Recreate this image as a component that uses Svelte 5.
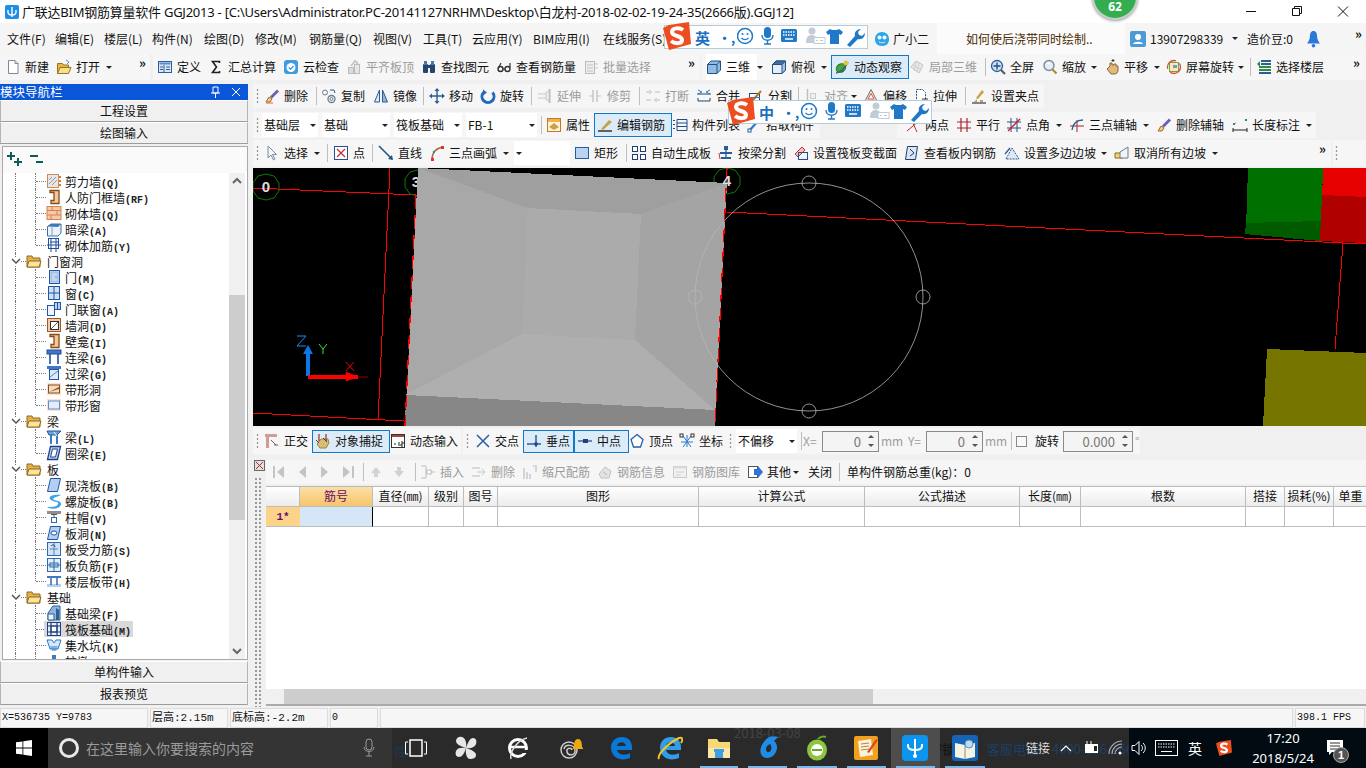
<script>
  const line = (d, c = '#555', w = 1) => `<path d="${d}" fill="none" stroke="${c}" stroke-width="${w}"/>`;
  const box = (x, y, w, h, f, s = 'none') => `<rect x="${x}" y="${y}" width="${w}" height="${h}" fill="${f}" stroke="${s}"/>`;

  const icons = {
    new: `<path d="M3.500 1.500h6.500l3 3v10h-9.500z" fill="#fff" stroke="#7d8a99"/><path d="M10 1.500v3h3" fill="#dfe6ee" stroke="#7d8a99"/>`,
    open: `<path d="M1.500 4.500h5l1 1.500h5v8h-11z" fill="#e9b73f" stroke="#9a7420"/><path d="M1.500 14.500l2.500-6h11l-2.500 6z" fill="#fbe08a" stroke="#9a7420"/>` + line('M10 1l3 2-2 2', '#5a8fc0'),
    def: box(1.500, 2.500, 13, 11, '#dbe8f6', '#2d5f9a') + box(2.500, 3.500, 11, 2, '#5c8ec6') + line('M7 6v7M3 8h3M3 10.500h3M9 8h4M9 10.500h4', '#2d5f9a'),
    sigma: line('M11.500 4V2.500H4.500L8.500 8l-4 5.500h7V12', '#222', 1.600),
    cloud: `<rect x="1" y="1" width="14" height="14" rx="3" fill="#3d9be0"/><circle cx="8" cy="8.500" r="4.500" fill="#fff"/>` + line('M5.800 8.500l1.700 1.800 3-3.300', '#3d9be0', 1.400),
    align: box(2.500, 8.500, 5, 6, '#ddd', '#bbb') + box(8.500, 5.500, 5, 9, '#e6e6e6', '#bbb') + line('M5 7l4-5 3 3', '#c6c6c6', 2),
    find: `<rect x="2" y="5" width="5" height="9" rx="1" fill="#23466f"/><rect x="9" y="5" width="5" height="9" rx="1" fill="#23466f"/><rect x="3" y="2" width="3" height="4" fill="#4a78a8"/><rect x="10" y="2" width="3" height="4" fill="#4a78a8"/><rect x="6" y="6" width="4" height="3" fill="#23466f"/>`,
    glasses: `<circle cx="4.500" cy="10" r="2.500" fill="none" stroke="#333" stroke-width="1.400"/><circle cx="11.500" cy="10" r="2.500" fill="none" stroke="#333" stroke-width="1.400"/>` + line('M7 10h2M2.500 9L5 4M14 9V4', '#333', 1.200),
    batch: box(2.500, 2.500, 9, 12, '#eee', '#bbb') + line('M4 6h6M4 9h6M4 12h6M12 5h3M12 9h3', '#c3c3c3') ,
    cube: `<path d="M1.500 5.500l3.500-3.500h9.500v9l-3.500 3.500h-9.500z" fill="#8fbde6" stroke="#24507e"/><path d="M1.500 5.500h9.500l3.500-3.500M11 5.500v9" fill="none" stroke="#24507e"/>`,
    top: `<path d="M1.500 5.500l3.500-3.500h9.500v9l-3.500 3.500h-9.500z" fill="#e4eef8" stroke="#24507e"/><path d="M1.500 5.500l3.500-3.500h9.500l-3.500 3.500z" fill="#3f6f9f" stroke="#24507e"/><path d="M11 5.500l3.500-3.500v9l-3.500 3.500z" fill="#a5c5e2" stroke="#24507e"/>`,
    orbit: `<ellipse cx="7" cy="9" rx="5" ry="4" fill="#4aa43c" stroke="#2b6a24" transform="rotate(-35 7 9)"/>` + line('M2 14C6 14 12 8 14 3', '#1d5f8a', 1.300) + `<circle cx="12" cy="4" r="2.500" fill="#e3c53a"/>`,
    local: `<path d="M2 8l5-6 7 4-4 8z" fill="#e9e9e9" stroke="#c2c2c2"/>` + line('M4 6l7 4M7 3l-2 9M10 4l-2 8', '#cfcfcf'),
    full: `<circle cx="7" cy="7" r="5.500" fill="#cfe0f2" stroke="#2a5c96" stroke-width="1.300"/>` + line('M7 3.500v7M3.500 7h7', '#1f4d87', 1.300) + line('M11 11l4 4', '#555', 2),
    zoom: `<circle cx="7" cy="6.500" r="5" fill="#e4ecf6" stroke="#7b8a9c" stroke-width="1.400"/>` + line('M10.500 10.500l4 4', '#b08a32', 2.200) + line('M5 4.500h3', '#fff', 1.500),
    pan: `<path d="M3 10l3-3V4h2v2h2V5h2v2h2v4c0 2-1 4-4 4H7z" fill="#e1b980" stroke="#8b6530"/>` + line('M9 0v3M7.500 1.500h3', '#333'),
    rot: `<rect x="3.500" y="3.500" width="9" height="9" fill="#ffe9a8" stroke="#6da34d"/><circle cx="8" cy="8" r="6.500" fill="none" stroke="#d94a3a" stroke-width="1.300" stroke-dasharray="14 4"/><rect x="7" y="6" width="4" height="3" fill="#5fa0d8"/>`,
    layers: `<path d="M5 2h10M5 5h10" stroke="#2c5f8d" stroke-width="2"/><path d="M3 8h12M3 11h12" stroke="#2c8a4c" stroke-width="2"/><path d="M3 14h12" stroke="#2c5f8d" stroke-width="2"/><path d="M1 5l3-3v6z" fill="#2c8a4c"/>`,
    erase: `<path d="M2 14l3-5 3 2-2 3z" fill="#f0d070" stroke="#a06b2f"/><path d="M6 8.500l7-7 2 2-7 7z" fill="#6a5fb0"/>` + line('M2 15h7', '#e06060'),
    copy: `<circle cx="4" cy="4.500" r="2.500" fill="none" stroke="#6b7c8e"/><circle cx="10.500" cy="11" r="3.500" fill="none" stroke="#6b7c8e" stroke-width="1.300"/><circle cx="10.500" cy="11" r="1.500" fill="none" stroke="#6b7c8e"/>` + line('M9 2h4l1 3', '#2a5c96'),
    mirror: `<path d="M6.500 2v12h-5z" fill="#dce8f4" stroke="#2a5c96"/><path d="M9.500 2v12h5z" fill="#8fb5dc" stroke="#2a5c96"/>`,
    move: line('M8 1v14M1 8h14', '#2a5c96', 1.400) + `<path d="M8 0l2.500 3h-5zM8 16l2.500-3h-5zM0 8l3-2.500v5zM16 8l-3-2.500v5z" fill="#2a5c96"/>`,
    spin: `<path d="M3.500 4.500a6 6 0 1 0 9 0" fill="none" stroke="#2268bd" stroke-width="3"/><path d="M3 1.500v6l4-3z" fill="#2268bd"/>`,
    ext: line('M1 6h8M1 10h8', '#c8c8c8') + line('M12.500 1v14', '#bdbdbd', 2) + `<path d="M9 4h3v8H9z" fill="#eee" stroke="#ccc"/>`,
    trim: line('M2 8h4M10 8h4', '#c5c5c5') + line('M6 2v12M10 2v12', '#c5c5c5', 1.500),
    brk: line('M1 4h5M10 4h5M1 12h5M10 12h5', '#bdbdbd') + line('M4 2l3 2-3 2M12 10l-3 2 3 2', '#c6d3df'),
    merge: line('M1 6h14M2 13h12M2 13v-3M14 13v-3', '#25496f') + line('M2 2l4 2-4 2M14 2l-4 2 4 2', '#2c7bc2'),
    split: box(1.500, 5.500, 10, 8, '#fff', '#25496f') + line('M5 12l8-9', '#b9791c', 2) + line('M1 9.500h11', '#2c7bc2'),
    aln: line('M3.500 1v14M3.500 14.500H14', '#bfbfbf', 1.500) + box(6.500, 5.500, 5, 5, '#eee', '#ccc'),
    off: `<path d="M8 1.500L14 13H2z" fill="#f6d9d0" stroke="#777"/><path d="M8 5.500L11 11H5z" fill="#fff" stroke="#d85a4a"/>`,
    str: `<path d="M3.500 1.500h6l3 3v10h-9z" fill="#fff" stroke="#2f4f6f" stroke-dasharray="2 1"/>` + line('M9 11h6', '#333'),
    grip: `<path d="M3 14h3v-3zM9 14h3v-2H9zM5 10l6-8 2 2-6 7z" fill="#c9a04d"/>` + line('M1 15h14', '#111', 1) ,
    attr: box(1.500, 1.500, 13, 13, '#fff4d8', '#c67a1f') + box(2, 2, 12, 3, '#f0b24c') + `<path d="M3 10l5-4 5 4-5 3z" fill="#c9a04d"/>`,
    edit: line('M1 14h14', '#333', 1.500) + `<path d="M4 12l8-9 3 2-9 8z" fill="#c9a04d"/>`,
    list: line('M2 3v1M2 7v1M2 11v1', '#1f4f88', 2) + line('M5 2.500h10v11H5zM5 6h10M5 9.500h10', '#1f4f88'),
    pick: line('M3 14L12 4', '#2a7cc7', 2.200) + box(2, 12, 3, 3, '#fff', '#2a5c96'),
    two: line('M2 14L14 4M6 2l6 13', '#c02a2a') + box(3, 2, 3, 3, '#2c8a4c'),
    para: line('M5 1v14M11 1v14M1 5h14M1 11h14', '#a8232d', 1.200),
    ang: line('M5 1v14M1 5h14M1 11h14M11 1v14', '#264c8a') + line('M2 14L14 2', '#d41f1f', 1.500),
    arc3: line('M1 9h14M8 3v12', '#a8232d') + line('M3 13C4 6 8 3 14 3', '#2a5c96', 1.400),
    delaxis: `<path d="M2 14l3-5 3 2-2 3z" fill="#f0d070" stroke="#a06b2f"/><path d="M6 8.500l7-7 2 2-7 7z" fill="#6a5fb0"/>`,
    dim: line('M1 11v4M15 11v4M1 13h14', '#222') + box(1, 6, 2, 2, '#2c8a4c') + box(13, 2, 2, 2, '#2c8a4c') + line('M2 7l2-1', '#888'),
    sel: `<path d="M4 1v12l3-3 2.500 5 1.500-1-2.500-4.500h4z" fill="#f4f7fb" stroke="#7b8ea3"/>`,
    pt: box(1.500, 1.500, 13, 13, '#fff', '#2a4f8a') + line('M4 4l8 8M12 4l-8 8', '#c42a2a', 1.200),
    ln: line('M1 1l13 13', '#27547e', 1.600) + `<path d="M15 15l-5-1 4-4z" fill="#27547e"/>`,
    arc: line('M3 15C3 7 8 3 14 2', '#a96b3a', 1.400) + box(2, 13, 3, 3, '#d33') + box(12, 1, 3, 3, '#d33') + box(4, 6, 2, 2, '#2a7cc7'),
    rect: `<rect x="1.500" y="2.500" width="13" height="11" fill="#b9d3f3" stroke="#2a5c96"/>`,
    auto: box(1.500, 1.500, 5, 5, '#fff', '#1f3f6f') + box(9.500, 1.500, 5, 5, '#fff', '#1f3f6f') + box(1.500, 9.500, 5, 5, '#fff', '#1f3f6f') + box(9.500, 9.500, 5, 5, '#fff', '#1f3f6f'),
    beam: box(6, 1, 4, 4, '#2a5c96') + line('M2 8h12', '#2a5c96', 2) + line('M8 5v9', '#2a5c96', 1.300) + line('M3 13h10', '#2a5c96', 2) + line('M1 8l1 6', '#d33'),
    section: `<path d="M2 9l7-7 3 3-7 7z" fill="#f1c3b7" stroke="#c52e2e"/>` + box(5.500, 7.500, 9, 7, 'none', '#1f4f9a'),
    inner: `<path d="M3.500 1.500h10l-2 13h-10z" fill="#d9e5f2" stroke="#1f3f6f"/>` + line('M6 4l4 4-4 3', '#1f3f6f'),
    slope: `<path d="M2 14L8 3l7 11z" fill="#dfe9f4" stroke="#2a5c96" stroke-dasharray="2 1"/>` + line('M1 9l5-6', '#2a5c96', 1.300),
    noslope: `<path d="M1 8h8v5H1z" fill="#f3d66a" stroke="#8a6d1f"/><path d="M6 7L14 2v11H6z" fill="#f3f3f3" stroke="#6a7a8a"/>`,
    ortho: box(1, 1, 12, 3, '#d39b95') + box(2, 1, 3, 14, '#d39b95') + line('M7 7l5 5M10 12h4', '#666'),
    osnap: `<path d="M2 11l4-5h7l1 4-3 5H5z" fill="#d8bd74" stroke="#9d8439"/>` + line('M4 1v7M11 1v7', '#b0333a', 1.300) + line('M1 7l3 3M8 5l4 4', '#444'),
    dyn: box(1.500, 1.500, 13, 13, '#fff', '#333') + box(2, 2, 12, 2, '#a43') + line('M4 11h2M9 9v4M11 9h2v2h-2v2h2', '#222'),
    cross: line('M2 2l12 12M14 2L2 14', '#2a5ca8', 1.500),
    perp: line('M1 11h14', '#2a5ca8', 1.500) + line('M10 2v12', '#2a5ca8', 1.500) + box(8.500, 9.500, 3, 3, '#1f3f7f'),
    mid: line('M1 8h14', '#2a5ca8', 1.400) + box(6, 6, 5, 4, '#1f3f7f'),
    vertex: `<path d="M8 1.500l6 5-2.500 7.500H4.500L2 6.500z" fill="#fff" stroke="#2a5ca8" stroke-width="1.300"/>`,
    coord: line('M8 2v12M2 9h12M4 3l8 11M12 3L4 14', '#2a7cc7', 1) + box(1, 1, 3, 3, '#fff', '#333') + box(12, 1, 3, 3, '#fff', '#333'),
    first: line('M3 2v12', '#c4c4c4', 2) + `<path d="M13 2v12L6 8z" fill="#c4c4c4"/>`,
    prev: `<path d="M11 2v12L4 8z" fill="#c4c4c4"/>`,
    next: `<path d="M5 2v12l7-6z" fill="#c4c4c4"/>`,
    last: line('M13 2v12', '#c4c4c4', 2) + `<path d="M3 2v12l7-6z" fill="#c4c4c4"/>`,
    up: `<path d="M8 3l5 6h-3v4H6V9H3z" fill="#d2d2d2"/>`,
    down: `<path d="M8 13l5-6h-3V3H6v4H3z" fill="#d2d2d2"/>`,
    ins: line('M1 2h5v12H1M9 8h6', '#bdbdbd') + box(7, 6, 4, 4, '#fff', '#bbb'),
    del: line('M1 4h8M1 12h8', '#bdbdbd') + line('M6 8h8M11 5l3 3-3 3', '#c8c8c8'),
    scale: line('M2 4v11M5 8v7M8 10v5M11 2h4M14 3v5', '#bebebe', 1.200),
    info: `<path d="M2 10l6-7 6 4-2 7H4z" fill="#e2e2e2" stroke="#c2c2c2"/>` + line('M6 8l4 3', '#bbb'),
    lib: box(1.500, 2.500, 13, 11, '#f1f1f1', '#c8c8c8') + box(1.500, 2.500, 13, 2, '#dcdcdc') + line('M4 8h8M4 11h5', '#cfcfcf'),
    other: box(1.500, 2.500, 9, 11, '#fff', '#555') + `<path d="M7 5h4V2l5 6-5 6v-3H7z" fill="#2d74d8"/>`,

    t_shear: box(1.500, 1.500, 11, 13, '#e6e6e6', '#c98b5a') + line('M3 11l7-7M3 7l3-3M6 12l5-5', '#999') + line('M14 3v2M14 7v2M14 11v2', '#d57a2a', 2),
    t_door: `<path d="M4 1.500h9v13H5v-3h3v-8H4z" fill="#f3c79f" stroke="#8b4b13" stroke-width="1.300"/>`,
    t_brick: box(1, 1.500, 14, 13, '#f7c9a8', '#d08552') + line('M1 5.500h14M1 10h14M6 1.500v4M11 5.500V10M5 10v4.500', '#d08552'),
    t_hidden: `<path d="M1.500 5.500L5 3h10v9l-3 3H1.500z" fill="#eaf3fb" stroke="#3a6ea8"/><path d="M1.500 5.500L5 3h10l-3 3z" fill="#3f78b5"/>` + line('M6 6v9', '#7aa2cc'),
    t_rebar: box(2.500, 1.500, 10, 10, '#fff', '#1f4fa0') + line('M1 8h14M5 1v14M10 1v14M4 5h8', '#1f4fa0'),
    t_d: box(3.500, 1.500, 10, 13, '#dfe9f6', '#1f56a8') + box(5, 3, 7, 10, '#c0d6ef', '#8eb0da') + box(9.500, 7.500, 1, 1, '#1f56a8'),
    t_w: box(2.500, 1.500, 11, 13, '#cfe0f3', '#1f56a8') + line('M8 1.500v13M2.500 8h11', '#1f56a8'),
    t_dw: box(1.500, 4.500, 7, 10, '#eef4fb', '#1f56a8') + box(8.500, 1.500, 6, 7, '#bcd3ee', '#1f56a8') + line('M11.500 1.500v7', '#1f56a8'),
    t_hole: box(1.500, 1.500, 13, 13, '#f7c9a8', '#9a5a2a') + box(4.500, 4.500, 8, 8, '#fff', '#333') + line('M5 12l7-7', '#555'),
    t_link: box(1, 1, 14, 4, '#3f78c5', '#1f4fa0') + line('M4 5v10M12 5v10', '#1f4fa0', 1.600),
    t_over: box(1, 1, 14, 3, '#3f78c5') + box(3.500, 4.500, 9, 10, '#dfe9f6', '#1f56a8') + line('M4 12l8-6', '#4a86cc'),
    t_strip: box(1, 2, 14, 12, '#fbe1d0') + box(2.500, 4, 11, 8, '#f2dcc4', '#8b4b13') + `<path d="M3 11l10-5v2l-10 3z" fill="#8b5a2a"/>`,
    t_stripw: box(1, 2, 14, 12, '#fbe1d0') + box(2.500, 4, 11, 8, '#e3eefa', '#5f8fc8'),
    t_beam: `<path d="M1 2h14l-4 4H3z" fill="#66a3dc" stroke="#1f56a8"/><path d="M5 6v9M11 6v9" stroke="#3c7ac0" stroke-width="2"/><path d="M8 3l3 4" stroke="#fff"/>`,
    t_ring: `<path d="M4.500 1.500h10l-3 13h-10z" fill="#b9d3f3" stroke="#1f3f8a" stroke-width="1.300"/><path d="M6.500 4h5l-2 8h-5z" fill="#fff" stroke="#1f3f8a"/>`,
    t_slab: `<path d="M4.500 1.500h10l-3 13h-10z" fill="#b3d0f3" stroke="#1f56a8"/>`,
    t_spiral: `<path d="M15 2C6 1 1 4 5 7s8 1 7 4-6 3-11 3c4 3 14 2 14-3 0-4-7-3-8-5 1-2 4-2 8-4z" fill="#3ea3e6"/>`,
    t_cap: box(1, 2, 14, 3, '#8e8e8e') + line('M5 5.500h6M8 6v2', '#555') + box(5.500, 8.500, 5, 5, '#fff', '#2a6ab0'),
    t_ho: `<path d="M4.500 1.500h10l-3 13h-10z" fill="#b3d0f3" stroke="#1f56a8"/><ellipse cx="8" cy="8" rx="3" ry="2" fill="#fff" stroke="#1f56a8"/>`,
    t_force: box(1.500, 1.500, 13, 13, '#d3e3f5', '#2a6ab0') + line('M8 1.500v13M4 8h8', '#4a86cc') + line('M5 5c2-2 4-1 4 1', '#2a3f6a'),
    t_neg: box(1.500, 1.500, 13, 13, '#e7f0fa', '#2a6ab0') + line('M8 1.500v13M1.500 8h13', '#2a6ab0') + box(4, 6, 8, 4, 'none', '#2a6ab0'),
    t_band: box(1, 3, 14, 2, '#3f78c5') + box(1, 11, 14, 3, '#b3d0f3') + line('M5 5v7M11 5v7', '#1f4fa0', 1.300),
    t_fbeam: `<path d="M2 15V8l5-7h7v14z" fill="#8fb6dd" stroke="#2c5f9a"/><path d="M2 9h6v6H2z" fill="#eaf2fb" stroke="#2c5f9a"/><path d="M10 3l3 2v10h-3z" fill="#2f5f95"/>`,
    t_raft: box(1.500, 1.500, 13, 13, '#e5eefa', '#1f3f7f', ) + box(5, 5, 6, 6, '#fff', '#1f3f7f') + line('M1.500 5h13M1.500 11h13M5 1.500v13M11 1.500v13', '#1f3f7f', 1.200),
    t_sump: `<path d="M1 3h5l2 3 2-3h5l-3 9H4z" fill="#d6e8f9" stroke="#2a7cc7"/><path d="M4 9h8l-2 5H6z" fill="#2a7cc7" opacity=".5"/>`,
    t_pier: `<path d="M4 8h8l2 6H2z" fill="#b3d0f3" stroke="#1f56a8"/><rect x="6" y="2" width="4" height="6" fill="#3f78c5"/>`
  };

  // a group spans x0..x1; each item runs from its own x to the next item's x
  function g(x0, x1, items) {
    return {
      x0, x1,
      items: items.map((it, i) => ({
        x: it[0], icon: it[1], text: it[2], flag: it[3] || '',
        w: (i + 1 < items.length ? items[i + 1][0] : x1) - it[0]
      }))
    };
  }

  function spaced(groups, start) {
    let prev = start;
    return groups.map((gr) => {
      const out = { ...gr, ml: gr.x0 - prev, pl: gr.items[0].x - gr.x0 };
      prev = gr.x1;
      return out;
    });
  }

  const row1 = spaced([
    g(0, 150, [[5, 'new', '新建'], [56, 'open', '打开'], [106, null, '', 'caret'], [139, null, '»', 'more']]),
    g(153, 700, [[157, 'def', '定义'], [208, 'sigma', '汇总计算'], [283, 'cloud', '云检查'], [346, 'align', '平齐板顶', 'off'], [421, 'find', '查找图元'], [496, 'glasses', '查看钢筋量'], [583, 'batch', '批量选择', 'off'], [688, null, '»', 'more']]),
    g(702, 1366, [[706, 'cube', '三维', 'white'], [757, null, '', 'caret'], [771, 'top', '俯视'], [821, null, '', 'caret'], [831, 'orbit', '动态观察', 'box'], [909, 'local', '局部三维', 'off'], [985, null, '', 'sep'], [990, 'full', '全屏'], [1042, 'zoom', '缩放'], [1091, null, '', 'caret'], [1104, 'pan', '平移'], [1154, null, '', 'caret'], [1166, 'rot', '屏幕旋转'], [1238, null, '', 'caret'], [1250, null, '', 'sep'], [1256, 'layers', '选择楼层'], [1353, null, '»', 'more']])
  ], 0);

  const row2 = spaced([
    g(253, 1044, [[256, null, '', 'grip'], [264, 'erase', '删除'], [316, null, '', 'sep'], [321, 'copy', '复制'], [373, 'mirror', '镜像'], [423, null, '', 'sep'], [429, 'move', '移动'], [480, 'spin', '旋转'], [531, null, '', 'sep'], [537, 'ext', '延伸', 'off'], [587, 'trim', '修剪', 'off'], [639, null, '', 'sep'], [645, 'brk', '打断', 'off'], [696, 'merge', '合并'], [748, 'split', '分割'], [798, null, '', 'sep'], [804, 'aln', '对齐', 'off'], [851, null, '', 'caret'], [863, 'off', '偏移'], [913, 'str', '拉伸'], [965, null, '', 'sep'], [971, 'grip', '设置夹点']])
  ], 253);

  const row3 = spaced([
    g(253, 820, [[256, null, '', 'grip'], [262, null, '基础层', 'combo'], [322, null, '基础', 'combo'], [394, null, '筏板基础', 'combo'], [466, null, 'FB-1', 'combo'], [541, null, '', 'sep'], [546, 'attr', '属性'], [594, 'edit', '编辑钢筋', 'box'], [672, 'list', '构件列表'], [746, 'pick', '拾取构件']]),
    g(897, 1316, [[905, 'two', '两点'], [956, 'para', '平行'], [1006, 'ang', '点角'], [1056, null, '', 'caret'], [1069, 'arc3', '三点辅轴'], [1143, null, '', 'caret'], [1156, 'delaxis', '删除辅轴'], [1232, 'dim', '长度标注'], [1306, null, '', 'caret']])
  ], 253);

  const row4 = spaced([
    g(253, 1331, [[256, null, '', 'grip'], [264, 'sel', '选择'], [314, null, '', 'caret'], [327, null, '', 'sep'], [333, 'pt', '点'], [372, null, '', 'sep'], [378, 'ln', '直线'], [429, 'arc', '三点画弧'], [503, null, '', 'caret'], [514, null, '', 'combo'], [574, 'rect', '矩形'], [626, null, '', 'sep'], [631, 'auto', '自动生成板'], [718, 'beam', '按梁分割'], [793, 'section', '设置筏板变截面'], [904, 'inner', '查看板内钢筋'], [1004, 'slope', '设置多边边坡'], [1101, null, '', 'caret'], [1114, 'noslope', '取消所有边坡'], [1212, null, '', 'caret'], [1319, null, '»', 'more']]),
    g(1333, 1366, [[1335, null, '', 'grip']])
  ], 253);

  const snapRow = spaced([
    g(253, 461, [[256, null, '', 'grip'], [264, 'ortho', '正交'], [312, 'osnap', '对象捕捉', 'box'], [390, 'dyn', '动态输入']]),
    g(463, 1140, [[466, null, '', 'grip'], [475, 'cross', '交点'], [523, 'perp', '垂点', 'box'], [574, 'mid', '中点', 'box'], [629, 'vertex', '顶点'], [679, 'coord', '坐标'], [729, null, '', 'grip'], [736, null, '不偏移', 'combo'], [801, null, '', 'sep'], [803, null, 'X=', 'off'], [822, null, '0', 'input'], [881, null, 'mm', 'off'], [908, null, 'Y=', 'off'], [926, null, '0', 'input'], [985, null, 'mm', 'off'], [1011, null, '', 'sep'], [1016, null, '', 'check'], [1035, null, '旋转'], [1063, null, '0.000', 'input'], [1135, null, '°', 'off']])
  ], 253);

  const gridRow = spaced([
    g(266, 1366, [[271, 'first', ''], [295, 'prev', ''], [316, 'next', ''], [340, 'last', ''], [363, null, '', 'sep'], [368, 'up', ''], [391, 'down', ''], [415, null, '', 'sep'], [420, 'ins', '插入', 'off'], [471, 'del', '删除', 'off'], [522, 'scale', '缩尺配筋', 'off'], [597, 'info', '钢筋信息', 'off'], [672, 'lib', '钢筋图库', 'off'], [747, 'other', '其他'], [793, null, '', 'caret'], [808, null, '关闭'], [839, null, '', 'sep'], [847, null, '单构件钢筋总重(kg)：0']])
  ], 266);

  const menus = [['文件(F)', 48], ['编辑(E)', 49], ['楼层(L)', 48], ['构件(N)', 52], ['绘图(D)', 51], ['修改(M)', 54], ['钢筋量(Q)', 64], ['视图(V)', 50], ['工具(T)', 49], ['云应用(Y)', 61], ['BIM应用(I)', 70], ['在线服务(S)', 80]];

  const tree = [
    ['剪力墙', '(Q)', 't_shear'], ['人防门框墙', '(RF)', 't_door'], ['砌体墙', '(Q)', 't_brick'], ['暗梁', '(A)', 't_hidden'], ['砌体加筋', '(Y)', 't_rebar', 'last'],
    ['门窗洞', '', 'head'],
    ['门', '(M)', 't_d'], ['窗', '(C)', 't_w'], ['门联窗', '(A)', 't_dw'], ['墙洞', '(D)', 't_hole'], ['壁龛', '(I)', 't_door'], ['连梁', '(G)', 't_link'], ['过梁', '(G)', 't_over'], ['带形洞', '', 't_strip'], ['带形窗', '', 't_stripw', 'last'],
    ['梁', '', 'head'],
    ['梁', '(L)', 't_beam'], ['圈梁', '(E)', 't_ring', 'last'],
    ['板', '', 'head'],
    ['现浇板', '(B)', 't_slab'], ['螺旋板', '(B)', 't_spiral'], ['柱帽', '(V)', 't_cap'], ['板洞', '(N)', 't_ho'], ['板受力筋', '(S)', 't_force'], ['板负筋', '(F)', 't_neg'], ['楼层板带', '(H)', 't_band', 'last'],
    ['基础', '', 'head'],
    ['基础梁', '(F)', 't_fbeam'], ['筏板基础', '(M)', 't_raft', 'sel'], ['集水坑', '(K)', 't_sump'], ['柱墩', '(Y)', 't_pier']
  ];

  const columns = [
    ['', ''], ['筋号', 'hot'], ['直径(㎜)', ''], ['级别', ''], ['图号', ''], ['图形', ''], ['计算公式', ''], ['公式描述', ''], ['长度(㎜)', ''], ['根数', ''], ['搭接', ''], ['损耗(%)', ''], ['单重', '']
  ];

  const imeIcons = `
    <circle cx="8" cy="9" r="7.500" fill="none" stroke="#1f78c8" stroke-width="1.500"/><circle cx="5.500" cy="7" r="1" fill="#1f78c8"/><circle cx="10.500" cy="7" r="1" fill="#1f78c8"/><path d="M4.500 11c2 2 5 2 7 0" fill="none" stroke="#1f78c8" stroke-width="1.300"/>
    <g transform="translate(24 0)"><rect x="3" y="0" width="7" height="11" rx="3.500" fill="#1f78c8"/><path d="M1 8c0 7 11 7 11 0M6.500 13v3.500M3 17h7" fill="none" stroke="#1f78c8" stroke-width="1.400"/></g>
    <g transform="translate(44 2)"><rect x="0" y="0" width="16" height="13" rx="1.500" fill="#1f78c8"/><path d="M2 3h12M2 6h12" stroke="#fff" stroke-dasharray="1.500 1" stroke-width="1.500"/><path d="M4 10h8" stroke="#fff" stroke-width="1.500"/></g>
    <g transform="translate(68 0)"><circle cx="7" cy="4" r="3.500" fill="#c2ccd6"/><path d="M1 16c0-6 2-8 6-8 2 0 3 1 4 2H9v6z" fill="#c2ccd6"/><rect x="9" y="10.500" width="11" height="6" fill="#fff" stroke="#c2ccd6"/><path d="M11 13.500h2M15 13.500h3" stroke="#c2ccd6"/></g>
    <path d="M93 2l-4 3 2 3 2-1v10h9V7l2 1 2-3-4-3-2 1h-5z" fill="#1f78c8"/>
    <path d="M110 18l8-9c-1-4 2-7 6-7l-3 3 1 3 3 1 3-3c0 4-3 7-7 6l-8 8z" fill="#1f78c8"/>`;

  const centers = [
    [415, 'view'], [466, 'pin'], [518, 'iew'], [570, 'swirl'], [622, 'edge'], [670, 'ie'], [719, 'folder', 'on'], [767, 'gl', 'on'], [817, 'ge', 'on'], [866, 'note', 'on'], [915, 'fork', 'active'], [964, 'book', 'on']
  ];
  const taskItems = centers.map((c, i) => {
    const l = i === 0 ? 392 : (centers[i - 1][0] + c[0]) / 2;
    const r = i + 1 < centers.length ? (c[0] + centers[i + 1][0]) / 2 : 990;
    return { name: c[1], state: c[2] || '', w: r - l };
  });

  const taskIcons = {
    view: `<rect x="7" y="5" width="12" height="16" fill="none" stroke="#fff" stroke-width="1.500"/><path d="M5 7H2.500v12H5M21 7h2.500v12H21" fill="none" stroke="#fff"/>`,
    pin: `<g fill="#e6e6e6"><path d="M13 13C7 11 3 9 3 6s3-5 6-4 5 5 4 11z"/><path d="M13 13c2-6 4-10 7-10s4 3 3 6-5 5-10 4z"/><path d="M13 13c6 2 10 4 10 7s-3 4-6 4-5-5-4-11z"/><path d="M13 13c-2 6-4 9-7 9s-4-3-3-6 5-4 10-3z"/></g>`,
    iew: `<circle cx="13" cy="13" r="8.500" fill="none" stroke="#fff" stroke-width="3"/><path d="M5 12h16" stroke="#fff" stroke-width="2.500"/><path d="M6 24C4 18 12 5 22 3" fill="none" stroke="#ddd" stroke-width="1.500"/><rect x="16" y="15" width="8" height="3" fill="#2a2a2a"/>`,
    swirl: `<circle cx="12" cy="15" r="8" fill="none" stroke="#ccc" stroke-width="1.500"/><path d="M7 14c1-5 10-5 11 1s-7 6-8 2 4-5 5-2" fill="none" stroke="#ccc" stroke-width="1.500"/><path d="M17 12c0-5 1-8 4-8s4 3 4 8l2 2H15z" fill="#f0a80f"/>`,
    edge: `<path d="M3 13C3 5 9 2 14 2c6 0 10 4 10 10v3H9c1 5 8 6 13 3v5c-7 3-18 2-19-10zM9 11h9c-1-5-8-5-9 0z" fill="#0a78d7"/>`,
    ie: `<path d="M3 13C3 5 9 2 14 2c6 0 10 4 10 10v3H9c1 5 8 6 13 3v5c-7 3-18 2-19-10zM9 11h9c-1-5-8-5-9 0z" fill="#2f9ee8"/><path d="M2 24c-2-3 6-14 20-21 4-1 4 2 2 5" fill="none" stroke="#f2c230" stroke-width="2"/>`,
    folder: `<path d="M2 4h9l2 3h11v16H2z" fill="#f6d877"/><rect x="2" y="13" width="22" height="10" fill="#fbe7a6"/><path d="M9 23v-6h8v6z" fill="#3f9de0"/><rect x="8" y="14" width="10" height="3" fill="#3f9de0"/>`,
    gl: `<path d="M14 2c5-1 9 0 9 0l-4 4c4 3 4 9 0 14-4 4-11 4-13-1s1-12 8-17zM12 11c-2 3-1 7 2 6s3-6 1-8z" fill="#1f8de6"/>`,
    ge: `<ellipse cx="13" cy="15" rx="10" ry="10.500" fill="#8cc63f"/><circle cx="13" cy="15" r="6" fill="#fff"/><path d="M8 15h10" stroke="#6aa82a" stroke-width="2"/><path d="M14 4c2-2 5-3 8-2" stroke="#6aa82a" stroke-width="2" fill="none"/>`,
    note: `<rect x="1" y="1" width="24" height="24" rx="2" fill="#f2a01e"/><path d="M5 6l13-2 2 16-13 2z" fill="#fbf3dc"/><path d="M8 9l8-1M8 12l8-1M8 15l8-1" stroke="#b9803a"/><path d="M14 17l9-13 2 1-9 13z" fill="#d8442c"/>`,
    fork: `<rect x="0" y="0" width="26" height="26" rx="4" fill="#0a96f0"/><path d="M13 4v18M6 9v2c0 3 3 4 7 4s7-1 7-4V9" fill="none" stroke="#fff" stroke-width="2"/><circle cx="13" cy="21" r="2" fill="#fff"/>`,
    book: `<rect x="0" y="0" width="26" height="26" rx="3" fill="#1464b8"/><path d="M3 8l10 2 10-2v14l-10 2-10-2z" fill="#f7f3e2"/><path d="M13 10v14" stroke="#888"/><circle cx="17" cy="9" r="4" fill="#bcdcf6" stroke="#5c8fc0"/>`
  };
</script>

{#snippet toolbar(groups)}
  <div class="tb-row">
    {#each groups as gr}
      <div class="tb-group" style="margin-left:{gr.ml}px;width:{gr.x1 - gr.x0}px;padding-left:{gr.pl}px">
        {#each gr.items as it}
          <div class="tb-item f-{it.flag}" style="width:{it.w}px">
            {#if it.flag === 'caret'}
              <i class="caret"></i>
            {:else if it.flag === 'sep'}
              <i class="sep"></i>
            {:else if it.flag === 'grip'}
              <i class="dots"></i>
            {:else if it.flag === 'check'}
              <i class="checkbox"></i>
            {:else if it.flag === 'combo'}
              <span class="combo">{it.text}<i class="caret"></i></span>
            {:else if it.flag === 'input'}
              <span class="field"><b>{it.text}</b><i class="spin"></i></span>
            {:else}
              {#if it.icon}
                <svg class="ico" viewBox="0 0 16 16">{@html icons[it.icon]}</svg>
              {/if}
              {#if it.text}<span>{it.text}</span>{/if}
            {/if}
          </div>
        {/each}
      </div>
    {/each}
  </div>
{/snippet}

{#snippet sogou(cls)}
  <svg class="sogou {cls}" viewBox="0 0 28 28">
    <path d="M6 3l20-3 2 22-22 6-6-22z" fill="#ee4d1f"/>
    <path d="M20 8c-4-3-11-2-11 2 0 5 10 3 10 8 0 4-7 4-11 1" fill="none" stroke="#fff" stroke-width="4"/>
  </svg>
{/snippet}

<div class="app">
  <header class="title">
    <svg class="app-ico" viewBox="0 0 14 14"><rect width="14" height="14" rx="2" fill="#1c8ee6"/><path d="M7 2v10M3 5v2c0 2 2 3 4 3s4-1 4-3V5" fill="none" stroke="#fff" stroke-width="1.400"/></svg>
    <span class="title-text">广联达BIM钢筋算量软件 GGJ2013 - [C:\Users\Administrator.PC-20141127NRHM\Desktop\白龙村-2018-02-02-19-24-35(2666版).GGJ12]</span>
    <div class="winbtns">
      <svg viewBox="0 0 46 23"><path d="M18 11.500h10" stroke="#111"/></svg>
      <svg viewBox="0 0 46 23"><path d="M18.500 8.500h7v7h-7zM20.500 8.500v-2h7v7h-2" fill="none" stroke="#111"/></svg>
      <svg viewBox="0 0 46 23"><path d="M18 6.500l10 10M28 6.500l-10 10" stroke="#111"/></svg>
    </div>
  </header>

  <nav class="menu">
    <div class="menu-left">
      {#each menus as [label, w]}
        <span style="width:{w}px">{label}</span>
      {/each}
    </div>
    <svg class="xiao" viewBox="0 0 16 16"><path d="M8 1c4 0 7 3 7 7s-2 7-7 7-7-3-7-7 3-7 7-7z" fill="#2aa5ea"/><circle cx="5.500" cy="6.500" r="2" fill="#fff"/><circle cx="10.500" cy="6.500" r="2" fill="#fff"/><path d="M5 11c2 1 4 1 6 0" stroke="#fff"/></svg>
    <span class="xiao-name">广小二</span>
    <div class="ask">如何使后浇带同时绘制..</div>
    <svg class="user" viewBox="0 0 16 16"><rect width="16" height="16" rx="2" fill="#4b9bd8"/><circle cx="8" cy="6" r="3" fill="#fff"/><path d="M3 13c1-3 9-3 10 0z" fill="#fff"/></svg>
    <span class="phone">13907298339</span>
    <i class="caret"></i>
    <span class="beans">造价豆:0</span>
    <svg class="bell" viewBox="0 0 14 20"><path d="M7 1c3 0 4 3 4 6 0 4 2 6 3 8H0c1-2 3-4 3-8 0-3 1-6 4-6z" fill="#2a78d8"/><circle cx="7" cy="17.500" r="2" fill="#2a78d8"/></svg>
    <span class="menu-more">»</span>
  </nav>

  <div class="row-top">{@render toolbar(row1)}</div>

  <div class="main">
    <aside class="side">
      <div class="side-head">
        <span>模块导航栏</span>
        <svg viewBox="0 0 40 16"><path d="M5 3h5v6H5zM3 9h9M7.500 9v5" fill="none" stroke="#fff"/><path d="M24 4l8 8M32 4l-8 8" stroke="#fff"/></svg>
      </div>
      <button class="side-btn">工程设置</button>
      <button class="side-btn">绘图输入</button>
      <div class="panel">
        <div class="tree-tools">
          <svg viewBox="0 0 36 16"><g fill="#0d5c55"><rect x="0" y="3" width="8" height="2"/><rect x="3" y="0" width="2" height="8"/><rect x="7" y="9" width="8" height="2"/><rect x="10" y="6" width="2" height="8"/><rect x="23" y="3" width="8" height="2"/><rect x="29" y="9" width="8" height="2"/></g></svg>
        </div>
        <div class="tree-wrap">
          <div class="tree">
            {#each tree as [name, code, ic, mark]}
              {#if ic === 'head'}
                <div class="node head">
                  <i class="root"></i>
                  <i class="tick-head"></i>
                  <svg class="chev" viewBox="0 0 10 8"><path d="M1 2l4 4 4-4" fill="none" stroke="#555" stroke-width="1.500"/></svg>
                  <svg class="folder" viewBox="0 0 16 14"><path d="M1 2h5l1 2h7v9H1z" fill="#e8b040" stroke="#8c6a24"/><path d="M1 13l2-6h12l-2 6z" fill="#fde49a" stroke="#8c6a24"/></svg>
                  <span>{name}</span>
                </div>
              {:else}
                <div class="node leaf">
                  <i class="root"></i>
                  <i class="stem" class:last={mark === 'last'}></i>
                  <i class="tick"></i>
                  <div class="entry" class:sel={mark === 'sel'}>
                    <svg class="ico" viewBox="0 0 16 16">{@html icons[ic]}</svg>
                    <span>{name}<em>{code}</em></span>
                  </div>
                </div>
              {/if}
            {/each}
          </div>
          <div class="vbar">
            <svg viewBox="0 0 16 16"><path d="M4 10l4-4 4 4" fill="none" stroke="#666" stroke-width="2"/></svg>
            <div class="vtrack"><div class="vthumb"></div></div>
            <svg viewBox="0 0 16 16"><path d="M4 6l4 4 4-4" fill="none" stroke="#666" stroke-width="2"/></svg>
          </div>
        </div>
      </div>
      <button class="side-btn low">单构件输入</button>
      <button class="side-btn">报表预览</button>
    </aside>

    <section class="work">
      <div class="r2">{@render toolbar(row2)}</div>
      <div class="r3">{@render toolbar(row3)}</div>
      <div class="r4">{@render toolbar(row4)}</div>

      <svg class="view3d" viewBox="253 168 1113 258" shape-rendering="crispEdges">
        <rect x="253" y="168" width="1113" height="258" fill="#000"/>
        <path d="M1248 168h75l-2 64-75-2z" fill="#007000"/>
        <path d="M1246 223l75-2-1 20-75-7z" fill="#005a00"/>
        <path d="M1323 168h43v37l-44-3z" fill="#e60000"/>
        <path d="M1322 195l44 2v46l-46-2z" fill="#b00000"/>
        <path d="M1267 349l99 4v73h-103z" fill="#757500"/>
        <g fill="none" stroke="#f00" stroke-width="1">
          <path d="M253 188l163 7M390 168l-12 252M253 413l245 13M727 212l616 31 23 1M1343 243l-8 106"/>
        </g>
        <g shape-rendering="auto">
          <polygon points="266,174 274,176 279,183 279,191 274,198 266,200 258,198 253,191 253,183 258,176" fill="none" stroke="#0a7a0a"/>
          <polygon points="418,170 426,172 431,179 431,187 426,194 418,196 410,194 405,187 405,179 410,172" fill="none" stroke="#0a7a0a"/>
          <polygon points="727,168 735,170 740,177 740,185 735,192 727,194 719,192 714,185 714,177 719,170" fill="none" stroke="#0a7a0a"/>
        </g>
        <text x="416" y="187" class="axis-num">3</text>
        <path d="M418 168l309 15-12 243H405z" fill="#a8a8a8"/>
        <path d="M418 168l309 15-86 31-113-6z" fill="#9f9f9f"/>
        <path d="M528 208l113 6-6 126-113-6z" fill="#ababab"/>
        <path d="M641 214l86-31-12 227-80-70z" fill="#a4a4a4"/>
        <path d="M522 334l113 6 80 70-310-15z" fill="#afafaf"/>
        <path d="M406 395l309 15v16H405z" fill="#878787"/>
        <g fill="none" stroke="#f00" stroke-width="1.200" stroke-dasharray="14 6">
          <path d="M416 195l-11 231M727 168l-12 258"/>
        </g>
        <g shape-rendering="auto" fill="none" stroke="#b5b5b5" stroke-width=".8">
          <circle cx="809" cy="297" r="114"/>
          <circle cx="809" cy="183" r="7"/><circle cx="809" cy="411" r="7"/><circle cx="695" cy="297" r="7"/><circle cx="923" cy="297" r="7"/>
        </g>
        <text x="266" y="192" class="axis-num">0</text>
        <text x="727" y="186" class="axis-num">4</text>
        <g shape-rendering="auto">
          <path d="M308 376v-22" stroke="#0a78e6" stroke-width="4"/>
          <path d="M303 354l5-9 5 9z" fill="#0a78e6"/>
          <path d="M308 377h50" stroke="#f00" stroke-width="4"/>
          <path d="M346 372l12 5-12 4zM358 377h10" fill="#f00" stroke="#f00" stroke-width=".6"/>
          <path d="M297 336h9l-9 10h9" fill="none" stroke="#1a8cf0"/>
          <path d="M319 344l4 5 4-5M323 349v5" fill="none" stroke="#2ee82e"/>
          <path d="M346 362l8 9M354 362l-8 9" fill="none" stroke="#e00"/>
        </g>
      </svg>

      <div class="snap">{@render toolbar(snapRow)}</div>

      <div class="grid-panel">
        <div class="strip">
          <svg viewBox="0 0 11 11"><rect x=".5" y=".5" width="10" height="10" fill="#e8dcdc" stroke="#666"/><path d="M2 2l7 7M9 2L2 9" stroke="#933"/></svg>
          <i class="dots wide"></i>
        </div>
        <div class="grid-body">
          {@render toolbar(gridRow)}
          <div class="sheet">
            <div class="cols">
              {#each columns as [label, cls]}
                <div class="hcell {cls}">{label}</div>
              {/each}
              <div class="rowhead">1*</div>
              <div class="cell active"></div>
              {#each columns.slice(2) as _}
                <div class="cell"></div>
              {/each}
            </div>
            <div class="hbar"><div class="hthumb"></div></div>
          </div>
        </div>
      </div>
    </section>
  </div>

  <footer class="status">
    <div class="st a">X=536735 Y=9783</div>
    <div class="st b">层高:2.15m</div>
    <div class="st c">底标高:-2.2m</div>
    <div class="st d">0</div>
    <div class="st e"></div>
    <div class="st f">398.1 FPS</div>
  </footer>

  <div class="taskbar">
    <div class="start">
      <svg viewBox="0 0 16 16"><path d="M0 2.300l6.500-.9v6.200H0zM7.300 1.300L16 0v7.600H7.300zM0 8.400h6.500v6.200L0 13.700zM7.300 8.400H16V16l-8.700-1.300z" fill="#fff"/></svg>
    </div>
    <div class="search">
      <i class="ring"></i>
      <span>在这里输入你要搜索的内容</span>
      <svg viewBox="0 0 12 20"><rect x="3" y="1" width="6" height="11" rx="3" fill="none" stroke="#9a9a9a"/><path d="M1 9c0 6 10 6 10 0M6 14v4M3 18h6" fill="none" stroke="#9a9a9a"/></svg>
    </div>
    {#each taskItems as t}
      <div class="task {t.state}" style="width:{t.w}px">
        <svg viewBox="0 0 26 26">{@html taskIcons[t.name]}</svg>
      </div>
    {/each}
    <div class="link">链接</div>
    <div class="tray">
      <svg class="t1" viewBox="0 0 12 8"><path d="M1 7l5-5 5 5" fill="none" stroke="#fff" stroke-width="1.200"/></svg>
      <svg class="t2" viewBox="0 0 16 16"><rect x="2" y="4" width="13" height="9" fill="#fff"/><path d="M4 1v3M8 1v3" stroke="#fff"/><rect x="11" y="6" width="3" height="5" fill="#222"/></svg>
      <svg class="t3" viewBox="0 0 16 16"><path d="M1 14a13 13 0 0 1 13-13M4 14a10 10 0 0 1 10-10M7 14a7 7 0 0 1 7-7" fill="none" stroke="#aaa" stroke-width="1.200"/><circle cx="12" cy="13" r="1.500" fill="#fff"/></svg>
      <svg class="t4" viewBox="0 0 16 16"><path d="M1 5.500h3l4-4v13l-4-4H1z" fill="none" stroke="#fff"/><path d="M10 5c2 2 2 4 0 6M12 3c3 3 3 7 0 10" fill="none" stroke="#fff"/></svg>
      <svg class="t5" viewBox="0 0 23 16"><rect x=".5" y=".5" width="22" height="15" fill="none" stroke="#fff"/><path d="M3 4h17M3 7h17" stroke="#fff" stroke-dasharray="1.500 1"/><path d="M6 11.500h11" stroke="#fff"/></svg>
      <span class="ying">英</span>
      {@render sogou('tray-s')}
      <div class="clock"><span>17:20</span><span>2018/5/24</span></div>
      <div class="action">
        <svg viewBox="0 0 16 16"><path d="M0 0h16v12H5l-3 3v-3H0z" fill="#fff"/><path d="M3 3h10M3 6h10M3 9h10" stroke="#333"/></svg>
        <b>1</b>
      </div>
    </div>
    <div class="ghost"><span class="g1">2018-03-08</span><span class="g2">性</span><span class="g3">密锁</span><span class="g4">客服电话：4000-166-166</span></div>
  </div>

  <div class="badge">62</div>

  <div class="ime one">
    {@render sogou('big')}
    <span class="ime-l">英</span>
    <span class="ime-p">•,</span>
    <svg viewBox="0 0 130 20">{@html imeIcons}</svg>
  </div>
  <div class="ime two">
    {@render sogou('big')}
    <span class="ime-l">中</span>
    <span class="ime-p">•,</span>
    <svg viewBox="0 0 130 20">{@html imeIcons}</svg>
  </div>
</div>

<style>
  :global(body) {
    margin: 0;
    background: #f0f0f0;
  }

  .app {
    position: relative;
    width: 1366px;
    height: 768px;
    overflow: hidden;
    display: flex;
    flex-direction: column;
    background: #f0f0f0;
    color: #111;
    font-family: "Noto Sans CJK SC", "Noto Sans", sans-serif;
    font-size: 12px;
  }

  i { font-style: normal; }

  /* title bar */
  .title {
    height: 23px;
    flex: none;
    display: flex;
    align-items: center;
    background: #fff;
    padding-left: 5px;
    box-sizing: border-box;
  }
  .app-ico { width: 14px; height: 14px; margin-right: 3px; }
  .title-text { font-size: 13px; font-family: "Noto Sans", "Noto Sans CJK SC", sans-serif; white-space: nowrap; letter-spacing: -0.24px; }
  .winbtns { margin-left: auto; display: flex; }
  .winbtns svg { width: 46px; height: 23px; }

  /* menu bar */
  .menu {
    height: 31px;
    flex: none;
    display: flex;
    align-items: center;
    background: #f5f5f5;
    padding-left: 7px;
    box-sizing: border-box;
  }
  .menu-left { display: flex; width: 867px; flex: none; white-space: nowrap; }
  .menu-left span { flex: none; }
  .xiao { width: 16px; height: 16px; margin-right: 3px; }
  .xiao-name { width: 44px; }
  .ask {
    width: 159px;
    height: 31px;
    padding-left: 29px;
    line-height: 31px;
    background: #fbfbfb;
    color: #4a2a00;
    white-space: nowrap;
  }
  .user { width: 16px; height: 16px; margin-left: 5px; margin-right: 4px; }
  .phone { width: 82px; }
  .menu .caret { margin-right: 9px; }
  .beans { width: 60px; }
  .bell { width: 13px; height: 18px; }
  .menu-more { margin-left: 35px; font-size: 13px; font-weight: 700; line-height: 1; margin-top: -10px; }

  /* toolbars */
  .row-top { height: 26px; flex: none; margin-bottom: 4px; }
  .tb-row { display: flex; height: 100%; }
  .tb-group {
    display: flex;
    align-items: center;
    flex: none;
    box-sizing: border-box;
    background: #f6f6f6;
    height: 100%;
  }
  .tb-item {
    display: flex;
    align-items: center;
    flex: none;
    box-sizing: border-box;
    height: 100%;
    white-space: nowrap;
    line-height: 1;
  }
  .f-off { color: #9c9c9c; }
  .f-white { background: #fff; }
  .f-box {
    background: #dcebf8;
    border: 1px solid #0f78c8;
    padding-left: 2px;
    height: 24px;
  }
  .f-more { font-size: 13px; font-weight: 700; align-items: flex-start; padding-top: 2px; }
  .ico { width: 16px; height: 16px; flex: none; margin-right: 4px; }
  .caret {
    display: inline-block;
    width: 0;
    height: 0;
    border-left: 3px solid transparent;
    border-right: 3px solid transparent;
    border-top: 3px solid #222;
    flex: none;
  }
  .sep { width: 1px; height: 18px; background: #bdbdbd; }
  .dots {
    width: 3px;
    height: 16px;
    background-image: radial-gradient(#9a9a9a 0.9px, transparent 1.1px);
    background-size: 3px 4px;
  }
  .dots.wide { display: block; width: 9px; height: 230px; margin-top: 6px; background-size: 4px 4px; }
  .combo {
    display: flex;
    align-items: center;
    justify-content: space-between;
    flex: 1;
    height: 24px;
    margin-right: 4px;
    padding: 0 2px 0 2px;
    background: #fff;
    box-sizing: border-box;
  }
  .field {
    position: relative;
    display: block;
    flex: 1;
    height: 21px;
    margin-right: 2px;
    border: 1px solid #8a8a8a;
    background: #f4f4f4;
    box-sizing: border-box;
    color: #777;
    text-align: right;
    line-height: 19px;
    font-size: 13px;
    padding-right: 17px;
  }
  .field b { font-weight: 400; }
  .spin {
    position: absolute;
    right: 4px;
    top: 3px;
    width: 0;
    height: 0;
    border-left: 3px solid transparent;
    border-right: 3px solid transparent;
    border-bottom: 3px solid #555;
  }
  .spin::after {
    content: '';
    position: absolute;
    left: -3px;
    top: 9px;
    border-left: 3px solid transparent;
    border-right: 3px solid transparent;
    border-top: 3px solid #555;
  }
  .checkbox { width: 9px; height: 9px; border: 1px solid #888; background: #f8f8f8; }

  /* main area */
  .main { flex: none; height: 624px; display: flex; }
  .side { width: 248px; flex: none; display: flex; flex-direction: column; }
  .side-head {
    height: 16px;
    display: flex;
    justify-content: space-between;
    align-items: center;
    background: #0a56d8;
    color: #fff;
    font-size: 12.500px;
    line-height: 16px;
    white-space: nowrap;
  }
  .side-head svg { width: 40px; height: 16px; flex: none; }
  .side-btn {
    height: 22px;
    flex: none;
    padding: 0;
    border: 1px solid #b5b5b5;
    border-top-color: #fff;
    border-bottom-color: #9c9c9c;
    background: #f0f0f0;
    color: #111;
    font: inherit;
    line-height: 18px;
    box-sizing: border-box;
  }
  .side-btn.low { margin-top: 1px; }
  .panel {
    margin-top: 2px;
    height: 514px;
    flex: none;
    display: flex;
    flex-direction: column;
    box-sizing: border-box;
    border: 1px solid #aaa;
    margin-left: 2px;
    background: #fff;
  }
  .tree-tools { height: 26px; flex: none; display: flex; align-items: center; padding-left: 4px; background: #fafafa; }
  .tree-tools svg { width: 36px; height: 16px; }
  .tree-wrap { flex: 1; display: flex; min-height: 0; }
  .tree { flex: 1; overflow: hidden; min-width: 0; }
  .node { position: relative; height: 16px; display: flex; align-items: center; white-space: nowrap; }
  .root { position: absolute; left: 12px; top: 0; bottom: 0; border-left: 1px dotted #777; }
  .stem { position: absolute; left: 32px; top: 0; bottom: 0; border-left: 1px dotted #777; }
  .stem.last { bottom: 8px; }
  .tick { position: absolute; left: 33px; width: 10px; top: 8px; border-top: 1px dotted #777; }
  .tick-head { position: absolute; left: 17px; width: 6px; top: 8px; border-top: 1px dotted #777; }
  .chev { position: relative; width: 10px; height: 8px; margin-left: 8px; background: #fff; flex: none; }
  .folder { width: 16px; height: 14px; margin-left: 5px; margin-right: 5px; flex: none; }
  .leaf { padding-left: 41px; }
  .entry { position: relative; display: flex; align-items: center; height: 16px; padding-left: 2px; padding-right: 2px; }
  .entry.sel { background: #d9d9d9; }
  .entry .ico { margin-right: 3px; }
  .node em { font: 700 10px "Liberation Mono", monospace; color: #222; }
  .vbar { width: 16px; flex: none; margin-right: 2px; display: flex; flex-direction: column; background: #f0f0f0; margin-left: 1px; }
  .vbar svg { width: 16px; height: 16px; flex: none; }
  .vtrack { flex: 1; padding-top: 106px; }
  .vthumb { height: 225px; background: #cdcdcd; }

  .work { width: 1113px; margin-left: 5px; flex: none; display: flex; flex-direction: column; }
  .r2 { height: 24px; flex: none; }
  .r3 { height: 26px; flex: none; margin-top: 4px; }
  .r4 { height: 26px; flex: none; margin-top: 2px; }
  .view3d { display: block; width: 1113px; height: 258px; margin-top: 2px; flex: none; }
  .axis-num { fill: #ddd; font: 700 15px "Liberation Sans", sans-serif; text-anchor: middle; }
  .snap { height: 26px; flex: none; margin-top: 2px; }
  .snap .f-box { height: 23px; }

  .grid-panel { flex: 1; display: flex; margin-top: 6px; min-height: 0; }
  .strip { width: 13px; flex: none; padding-left: 1px; box-sizing: border-box; }
  .strip svg { display: block; width: 11px; height: 11px; }
  .grid-body { flex: 1; display: flex; flex-direction: column; min-width: 0; }
  .grid-body > :global(.tb-row) { height: 24px; flex: none; }
  .sheet {
    margin-top: 2px;
    flex: 1;
    display: flex;
    flex-direction: column;
    background: #fff;
    border-top: 1px solid #b8b8b8;
    border-bottom: 2px solid #aaa;
    box-sizing: border-box;
    margin-bottom: 0;
    height: 220px;
    max-height: 220px;
  }
  .cols {
    flex: 1;
    display: grid;
    grid-template-columns: 34px 73px 56px 35px 34px 201px 166px 155px 61px 165px 39px 49px 34px;
    grid-template-rows: 20px 20px;
    align-content: start;
    background: #fff;
    overflow: hidden;
  }
  .hcell {
    background: linear-gradient(#fff, #ececec);
    border-right: 1px solid #bdbdbd;
    border-bottom: 1px solid #bdbdbd;
    text-align: center;
    line-height: 18px;
    white-space: nowrap;
    overflow: hidden;
    box-sizing: border-box;
  }
  .hcell.hot { background: linear-gradient(#fbdfa6, #f5c56a); color: #6a0a6a; }
  .rowhead {
    background: #fbd48a;
    color: #6a0a6a;
    font: 700 11px "Liberation Mono", monospace;
    text-align: center;
    line-height: 20px;
    border-bottom: 1px solid #bdbdbd;
    box-sizing: border-box;
  }
  .cell { border-right: 1px solid #bdbdbd; border-bottom: 1px solid #bdbdbd; box-sizing: border-box; }
  .cell.active { background: #d5e7f7; border-right: 1px solid #000; }
  .hbar { height: 15px; flex: none; background: #f0f0f0; padding-left: 18px; }
  .hthumb { width: 589px; height: 15px; background: #cdcdcd; }

  /* status bar */
  .status { height: 20px; flex: none; display: flex; gap: 2px; font: 10px "Liberation Mono", "Noto Sans CJK SC", monospace; line-height: 18px; }
  .st { box-sizing: border-box; border: 1px solid #dcdcdc; background: #f6f6f6; padding-left: 1px; white-space: nowrap; flex: none; }
  .a { width: 148px; }
  .b { width: 78px; }
  .c { width: 98px; }
  .d { width: 48px; }
  .e { width: 913px; }
  .f { width: 70px; }
  .b, .c { font-size: 11px; }

  /* taskbar */
  .taskbar { position: relative; height: 40px; flex: none; display: flex; background: #2a2a2a; color: #fff; }
  .start { width: 48px; background: #000; display: flex; align-items: center; justify-content: center; }
  .start svg { width: 16px; height: 16px; }
  .search { width: 344px; display: flex; align-items: center; background: #343434; color: #9a9a9a; font-size: 14px; white-space: nowrap; box-sizing: border-box; padding-left: 11px; }
  .search span { margin-left: 7px; width: 277px; }
  .search svg { width: 12px; height: 20px; }
  .ring { width: 14px; height: 14px; border: 3px solid #e8e8e8; border-radius: 50%; }
  .task { position: relative; z-index: 1; flex: none; display: flex; align-items: center; justify-content: center; box-sizing: border-box; }
  .task svg { width: 26px; height: 26px; }
  .task.on::after, .task.active::after { content: ''; position: absolute; bottom: 0; left: 5px; right: 5px; height: 2px; background: #76b9ed; }
  .task.active { background: #4d4d4d; }
  .link { position: relative; z-index: 1; margin-left: 36px; width: 60px; line-height: 40px; color: #ddd; font-size: 12px; }
  .tray { position: absolute; z-index: 1; right: 0; top: 0; bottom: 0; left: 1129px; background: rgba(0, 10, 16, 0.95); display: flex; align-items: center; }
  .tray svg { flex: none; }
  .t1 { width: 12px; height: 8px; margin-left: -69px; }
  .t2 { width: 16px; height: 16px; margin-left: 11px; }
  .t3 { width: 16px; height: 16px; margin-left: 9px; }
  .t4 { width: 16px; height: 16px; margin-left: 7px; }
  .t5 { width: 23px; height: 16px; margin-left: 8px; }
  .ying { margin-left: 10px; font-size: 14px; width: 14px; }
  .tray :global(.tray-s) { width: 16px; height: 18px; margin-left: 14px; }
  .clock { margin-left: 17px; width: 68px; display: flex; flex-direction: column; align-items: center; font: 13px "Noto Sans", sans-serif; line-height: 20px; }
  .action { position: relative; margin-left: 10px; }
  .action svg { display: block; width: 16px; height: 16px; }
  .action b {
    position: absolute;
    left: 6px;
    top: 7px;
    width: 16px;
    height: 16px;
    border-radius: 50%;
    background: #555;
    border: 1px solid #aaa;
    box-sizing: border-box;
    font: 700 11px/14px "Liberation Sans", sans-serif;
    text-align: center;
  }
  .ghost span { position: absolute; white-space: nowrap; font-size: 13px; }
  .g1 { left: 734px; top: -5px; color: #444; }
  .g2 { left: 394px; top: 13px; color: #20364f; }
  .g3 { left: 929px; top: 11px; color: #111; }
  .g4 { left: 987px; top: 11px; color: #1d3f66; }

  /* overlays */
  .badge {
    position: absolute;
    left: 1092px;
    top: -26px;
    width: 46px;
    height: 46px;
    box-sizing: border-box;
    border: 2px solid #c6cfc8;
    border-radius: 50%;
    background: #33ad4f;
    color: #fff;
    font: 700 12px "Noto Sans", sans-serif;
    text-align: center;
    line-height: 62px;
    box-shadow: 0 1px 3px rgba(0, 0, 0, 0.4);
  }
  .ime {
    position: absolute;
    display: flex;
    align-items: center;
    height: 24px;
    width: 204px;
    box-sizing: border-box;
    background: #fff;
    border: 1px solid #b8cbdb;
  }
  .ime.one { left: 664px; top: 25px; }
  .ime.two { left: 728px; top: 100px; }
  .ime :global(.big) { position: absolute; left: -2px; top: -4px; width: 28px; height: 28px; }
  .ime-l { margin-left: 30px; width: 18px; color: #1b6fc0; font-size: 15px; font-weight: 700; line-height: 1; }
  .ime-p { width: 19px; margin-left: 6px; color: #1b6fc0; font-weight: 700; font-size: 13px; line-height: 1; flex: none; }
  .ime svg:not(:global(.big)) { width: 130px; height: 20px; flex: none; }
</style>
